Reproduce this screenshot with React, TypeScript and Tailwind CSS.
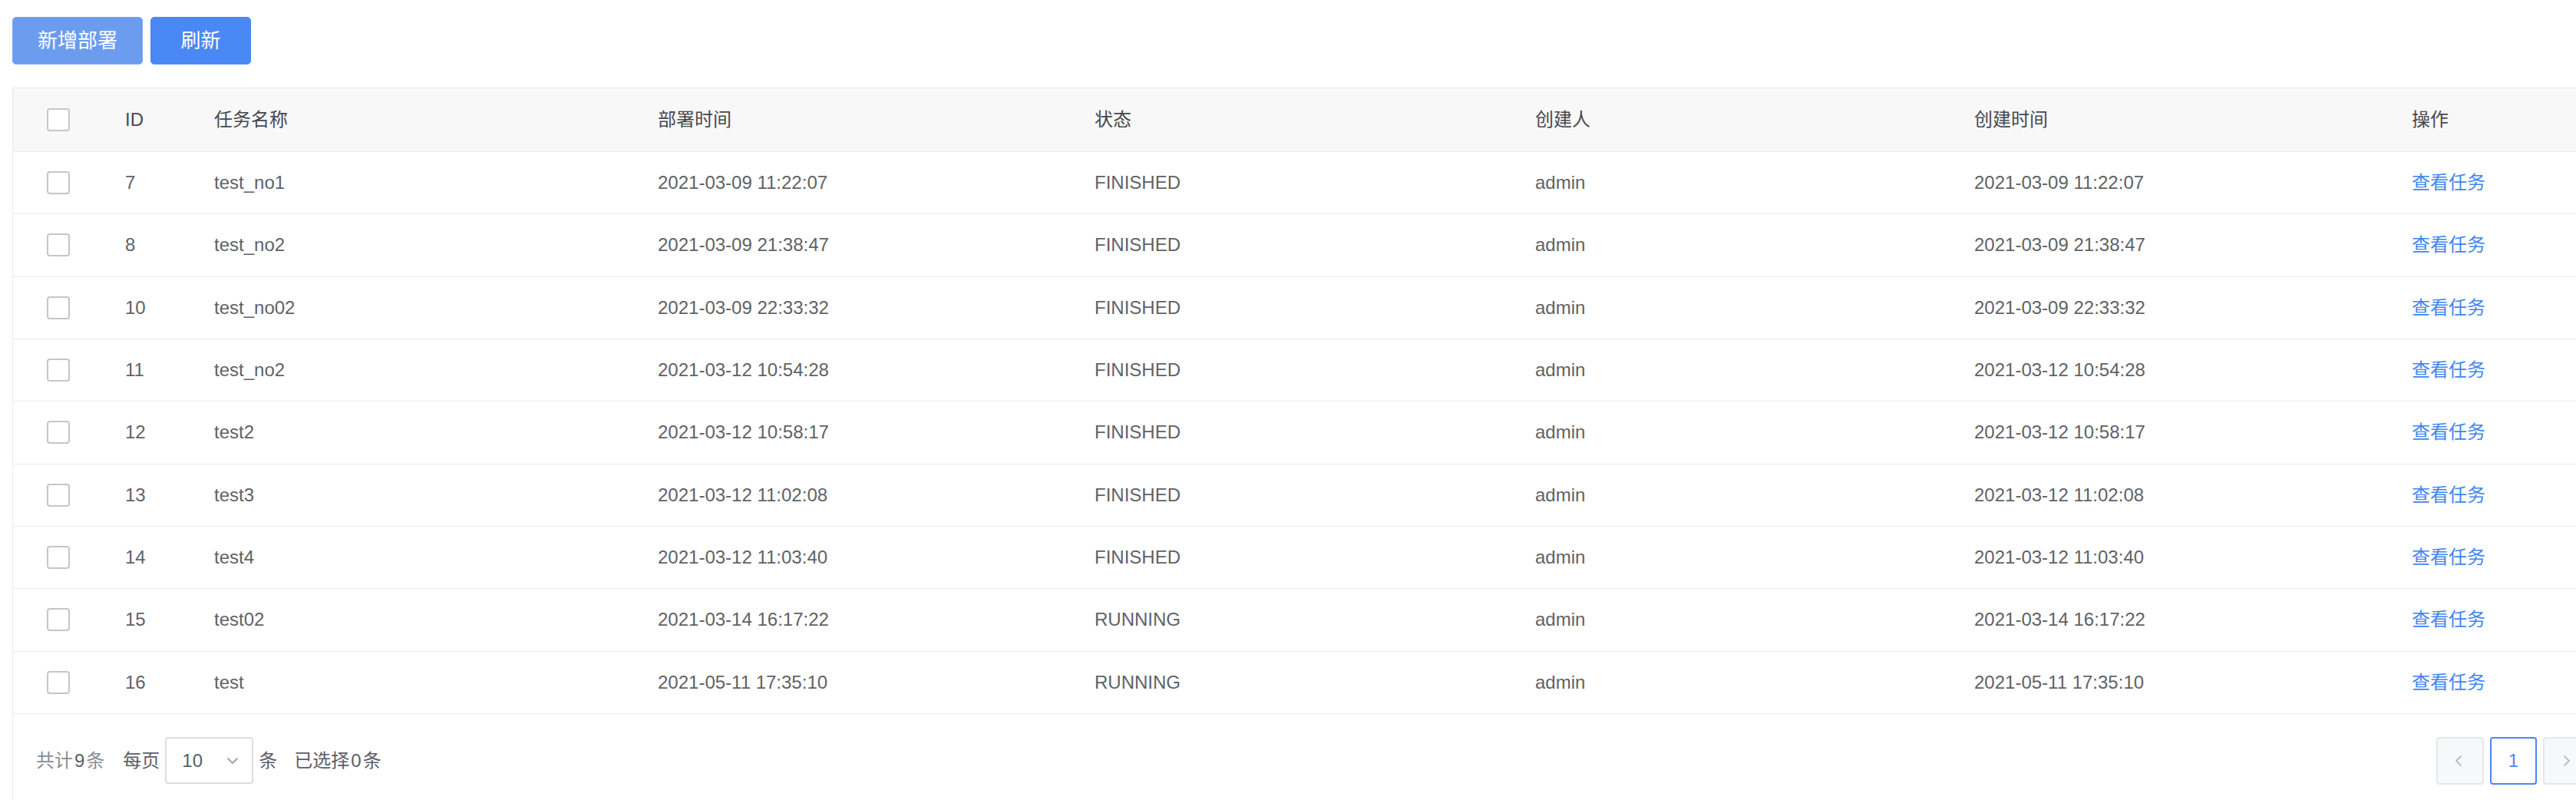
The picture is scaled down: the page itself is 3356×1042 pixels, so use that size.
import React from "react";

type Deploy = {
  id: number;
  name: string;
  deployTime: string;
  status: string;
  creator: string;
  createTime: string;
};

const deploys: Deploy[] = [
  { id: 7, name: "test_no1", deployTime: "2021-03-09 11:22:07", status: "FINISHED", creator: "admin", createTime: "2021-03-09 11:22:07" },
  { id: 8, name: "test_no2", deployTime: "2021-03-09 21:38:47", status: "FINISHED", creator: "admin", createTime: "2021-03-09 21:38:47" },
  { id: 10, name: "test_no02", deployTime: "2021-03-09 22:33:32", status: "FINISHED", creator: "admin", createTime: "2021-03-09 22:33:32" },
  { id: 11, name: "test_no2", deployTime: "2021-03-12 10:54:28", status: "FINISHED", creator: "admin", createTime: "2021-03-12 10:54:28" },
  { id: 12, name: "test2", deployTime: "2021-03-12 10:58:17", status: "FINISHED", creator: "admin", createTime: "2021-03-12 10:58:17" },
  { id: 13, name: "test3", deployTime: "2021-03-12 11:02:08", status: "FINISHED", creator: "admin", createTime: "2021-03-12 11:02:08" },
  { id: 14, name: "test4", deployTime: "2021-03-12 11:03:40", status: "FINISHED", creator: "admin", createTime: "2021-03-12 11:03:40" },
  { id: 15, name: "test02", deployTime: "2021-03-14 16:17:22", status: "RUNNING", creator: "admin", createTime: "2021-03-14 16:17:22" },
  { id: 16, name: "test", deployTime: "2021-05-11 17:35:10", status: "RUNNING", creator: "admin", createTime: "2021-05-11 17:35:10" },
];

const cols =
  "grid grid-cols-[122px_116px_578px_569px_574px_572px_570px_1fr] items-center";

const Checkbox = () => (
  <span className="block h-[30px] w-[30px] rounded-[4px] border-2 border-[#c3c6cc] bg-white" />
);

const Chevron = ({ dir }: { dir: "left" | "right" | "down" }) => {
  const points =
    dir === "left" ? "10,3 4,9 10,15" : dir === "right" ? "6,3 12,9 6,15" : "3,6 9,12 15,6";
  return (
    <svg width="18" height="18" viewBox="0 0 18 18" fill="none">
      <polyline points={points} stroke="currentColor" strokeWidth="1.8" strokeLinecap="round" strokeLinejoin="round" />
    </svg>
  );
};

export default function App() {
  return (
    <div className="h-[1042px] w-full overflow-hidden bg-white font-['Liberation_Sans','Noto_Sans_CJK_SC',sans-serif]">
      <div className="w-[3400px] pl-4 pt-[22px]">
        <div className="flex gap-[10px]">
          <button className="h-[62px] w-[170px] rounded-[5px] border border-[#7aa6f0] bg-[#6b9cee] text-[26px] text-white">
            新增部署
          </button>
          <button className="h-[62px] w-[131px] rounded-[5px] border border-[#4a88f5] bg-[#4a88f5] text-[26px] text-white">
            刷新
          </button>
        </div>

        <div className="mt-[30px] border border-[#e8eaec] text-[24px]">
          <div className={`${cols} h-[83px] border-b border-[#e8eaec] bg-[#f8f8f9] text-[#46484e]`}>
            <div className="pl-[44px]">
              <Checkbox />
            </div>
            <div className="pl-6">ID</div>
            <div className="pl-6">任务名称</div>
            <div className="pl-6">部署时间</div>
            <div className="pl-6">状态</div>
            <div className="pl-6">创建人</div>
            <div className="pl-6">创建时间</div>
            <div className="pl-6">操作</div>
          </div>

          {deploys.map((d) => (
            <div key={d.id} className={`${cols} h-[81.33px] border-b border-[#e8eaec] text-[#606266]`}>
              <div className="pl-[44px]">
                <Checkbox />
              </div>
              <div className="pl-6">{d.id}</div>
              <div className="pl-6">{d.name}</div>
              <div className="pl-6">{d.deployTime}</div>
              <div className="pl-6">{d.status}</div>
              <div className="pl-6">{d.creator}</div>
              <div className="pl-6">{d.createTime}</div>
              <div className="pl-6">
                <a className="cursor-pointer text-[#3f85f2]">查看任务</a>
              </div>
            </div>
          ))}

          <div className="flex items-center justify-between pb-[30px] pl-[30px] pr-[24px] pt-[30px]">
            <div className="flex items-center text-[#5b5e66]">
              <span className="text-[#8a8d94]">
                共计<span className="mx-[2px] text-[#5b5e66]">9</span>条
              </span>
              <span className="ml-[24px]">每页</span>
              <div className="ml-[7px] flex h-[61px] w-[115px] items-center justify-between rounded-[4px] border-2 border-[#dcdee2] pl-[20px] pr-[16px]">
                <span>10</span>
                <span className="text-[#9ea1a8]">
                  <Chevron dir="down" />
                </span>
              </div>
              <span className="ml-[7px]">条</span>
              <span className="ml-[22px]">
                已选择<span className="mx-[2px]">0</span>条
              </span>
            </div>
            <div className="flex items-center gap-[8px]">
              <span className="flex h-[62px] w-[62px] items-center justify-center rounded-[4px] border-2 border-[#e6e7ea] bg-[#f7f8fa] text-[#b9bcc2]">
                <Chevron dir="left" />
              </span>
              <span className="flex h-[62px] w-[61px] items-center justify-center rounded-[4px] border-2 border-[#4a88f5] bg-white text-[24px] text-[#4a88f5]">
                1
              </span>
              <span className="flex h-[62px] w-[62px] items-center justify-center rounded-[4px] border-2 border-[#e6e7ea] bg-[#f7f8fa] text-[#b9bcc2]">
                <Chevron dir="right" />
              </span>
            </div>
          </div>
        </div>
      </div>
    </div>
  );
}
